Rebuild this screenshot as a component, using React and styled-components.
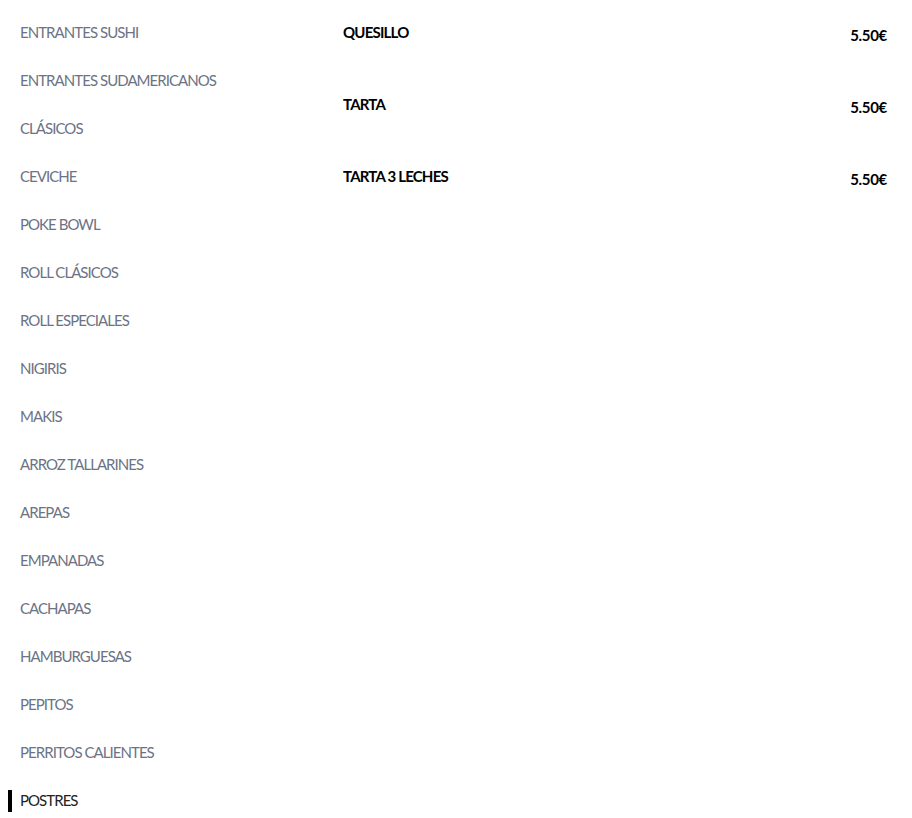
import { createGlobalStyle } from "styled-components";
import styled from "styled-components";

const GlobalStyle = createGlobalStyle`
  body {
    margin: 0;
    background: #fff;
    font-family: Lato, "Open Sans", sans-serif;
  }
`;

const Page = styled.div`
  display: grid;
  grid-template-columns: 343px 1fr;
  width: 912px;
  min-height: 818px;
`;

const Nav = styled.nav`
  display: flex;
  flex-direction: column;
  padding-top: 8px;
`;

const NavItem = styled.div`
  position: relative;
  height: 48px;
  display: flex;
  align-items: center;
  padding-left: 20px;
  font-size: 15px;
  letter-spacing: -0.95px;
  color: ${(p) => (p.$active ? "#222" : "#6b7385")};

  &::before {
    content: "";
    display: ${(p) => (p.$active ? "block" : "none")};
    position: absolute;
    left: 8px;
    top: 14px;
    width: 4px;
    height: 22px;
    background: #000;
  }
`;

const Menu = styled.section`
  display: flex;
  flex-direction: column;
  padding-right: 25px;
  padding-top: 8px;
`;

const Dish = styled.div`
  display: flex;
  justify-content: space-between;
  height: 72px;
`;

const DishName = styled.div`
  font-weight: 700;
  font-size: 15px;
  letter-spacing: -0.8px;
  color: #000;
  line-height: 48px;
  height: 48px;
`;

const Price = styled.div`
  font-weight: 700;
  font-size: 15px;
  letter-spacing: -0.3px;
  color: #000;
  line-height: 48px;
  padding-top: 3px;
`;

const categories = [
  "ENTRANTES SUSHI",
  "ENTRANTES SUDAMERICANOS",
  "CLÁSICOS",
  "CEVICHE",
  "POKE BOWL",
  "ROLL CLÁSICOS",
  "ROLL ESPECIALES",
  "NIGIRIS",
  "MAKIS",
  "ARROZ TALLARINES",
  "AREPAS",
  "EMPANADAS",
  "CACHAPAS",
  "HAMBURGUESAS",
  "PEPITOS",
  "PERRITOS CALIENTES",
  "POSTRES",
];

const dishes = [
  { name: "QUESILLO", price: "5.50€" },
  { name: "TARTA", price: "5.50€" },
  { name: "TARTA 3 LECHES", price: "5.50€" },
];

export default function App() {
  return (
    <>
      <GlobalStyle />
      <Page>
        <Nav>
          {categories.map((c) => (
            <NavItem key={c} $active={c === "POSTRES"}>
              {c}
            </NavItem>
          ))}
        </Nav>
        <Menu>
          {dishes.map((d) => (
            <Dish key={d.name}>
              <DishName>{d.name}</DishName>
              <Price>{d.price}</Price>
            </Dish>
          ))}
        </Menu>
      </Page>
    </>
  );
}
